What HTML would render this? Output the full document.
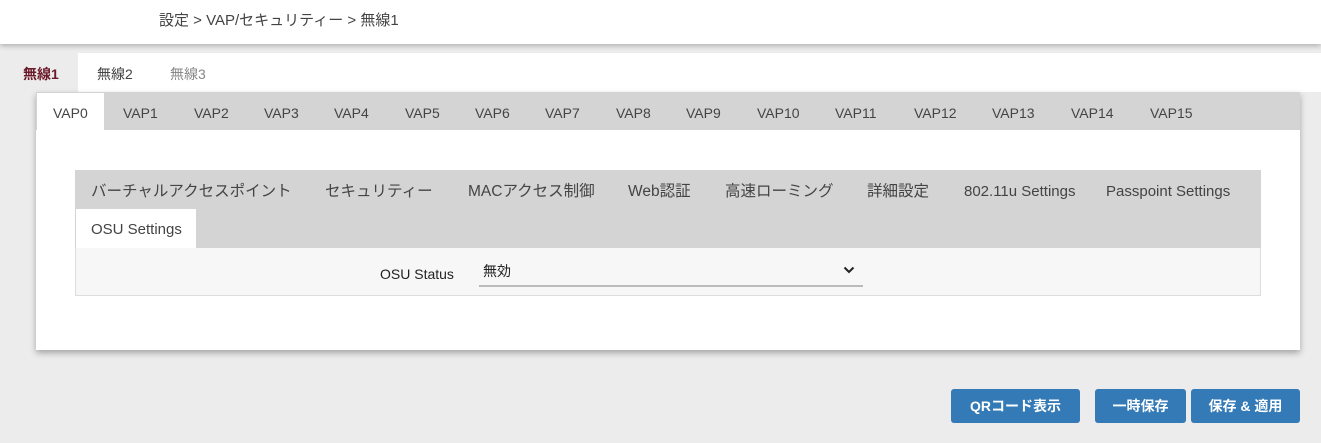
<!DOCTYPE html>
<html><head><meta charset="utf-8"><style>
*{margin:0;padding:0;box-sizing:border-box}
body{width:1321px;height:443px;background:#ececec;font-family:"Liberation Sans","Noto Sans CJK JP",sans-serif;color:#444;position:relative;overflow:hidden;font-size:14px}
.a{position:absolute;white-space:nowrap;line-height:20px}
#hdr{position:absolute;left:0;top:0;width:1321px;height:44px;background:#fff;box-shadow:0 2px 5px rgba(0,0,0,.25)}
#wt{position:absolute;left:8px;top:53px;width:1313px;height:39px;background:#fff}
#panel{position:absolute;left:36px;top:92px;width:1264px;height:258px;background:#fff;box-shadow:0 3px 6px rgba(0,0,0,.3)}
#vbar{position:absolute;left:36px;top:92px;width:1264px;height:38px;background:#d4d4d4}
#itab{position:absolute;left:75px;top:170px;width:1186px;height:78px;background:#d4d4d4}
#row{position:absolute;left:75px;top:248px;width:1186px;height:48px;background:#f7f7f7;border:1px solid #ddd;border-top:none}
.btn{position:absolute;top:389px;height:34px;background:#337ab7;color:#fff;border-radius:3px;font-size:14px;font-weight:bold;text-align:center;line-height:34px}
.t{font-size:15.5px}
</style></head><body>
<div id="hdr"></div>
<div class="a" style="left:159px;top:11px;font-size:15px;color:#444">設定 &gt; VAP/セキュリティー &gt; 無線1</div>
<div id="wt"></div>
<div style="position:absolute;left:8px;top:53px;width:70px;height:39px;background:#ececec"></div>
<div class="a" style="left:23px;top:64px;color:#6b1a2a;font-weight:bold">無線1</div>
<div class="a" style="left:97px;top:64px">無線2</div>
<div class="a" style="left:170px;top:64px;color:#888">無線3</div>
<div id="panel"></div>
<div id="vbar"></div>
<div style="position:absolute;left:37px;top:93px;width:67px;height:37px;background:#fff"></div>
<div class="a" style="left:53px;top:103px">VAP0</div>
<div class="a" style="left:123px;top:103px">VAP1</div>
<div class="a" style="left:194px;top:103px">VAP2</div>
<div class="a" style="left:264px;top:103px">VAP3</div>
<div class="a" style="left:334px;top:103px">VAP4</div>
<div class="a" style="left:405px;top:103px">VAP5</div>
<div class="a" style="left:475px;top:103px">VAP6</div>
<div class="a" style="left:545px;top:103px">VAP7</div>
<div class="a" style="left:616px;top:103px">VAP8</div>
<div class="a" style="left:686px;top:103px">VAP9</div>
<div class="a" style="left:757px;top:103px">VAP10</div>
<div class="a" style="left:835px;top:103px">VAP11</div>
<div class="a" style="left:914px;top:103px">VAP12</div>
<div class="a" style="left:992px;top:103px">VAP13</div>
<div class="a" style="left:1071px;top:103px">VAP14</div>
<div class="a" style="left:1150px;top:103px">VAP15</div>
<div id="itab"></div>
<div style="position:absolute;left:76px;top:209px;width:120px;height:39px;background:#fff"></div>
<div class="a t" style="left:91px;top:182px">バーチャルアクセスポイント</div>
<div class="a t" style="left:325px;top:182px">セキュリティー</div>
<div class="a t" style="left:468px;top:182px">MACアクセス制御</div>
<div class="a t" style="left:628px;top:182px">Web認証</div>
<div class="a t" style="left:725px;top:182px">高速ローミング</div>
<div class="a t" style="left:867px;top:182px">詳細設定</div>
<div class="a" style="left:964px;top:182px;font-size:15px">802.11u Settings</div>
<div class="a" style="left:1106px;top:182px;font-size:15px">Passpoint Settings</div>
<div class="a" style="left:91px;top:220px;font-size:15px">OSU Settings</div>
<div id="row"></div>
<div class="a" style="left:380px;top:264px;color:#222">OSU Status</div>
<div class="a" style="left:483px;top:261px;color:#222">無効</div>
<div style="position:absolute;left:479px;top:285px;width:384px;height:2px;background:#bbb"></div>
<svg style="position:absolute;left:843px;top:266px" width="12" height="8" viewBox="0 0 12 8"><path d="M1.5 1.5 L6 6 L10.5 1.5" fill="none" stroke="#222" stroke-width="2"/></svg>
<div class="btn" style="left:951px;width:129px">QRコード表示</div>
<div class="btn" style="left:1095px;width:91px">一時保存</div>
<div class="btn" style="left:1191px;width:109px">保存 &amp; 適用</div>
</body></html>
